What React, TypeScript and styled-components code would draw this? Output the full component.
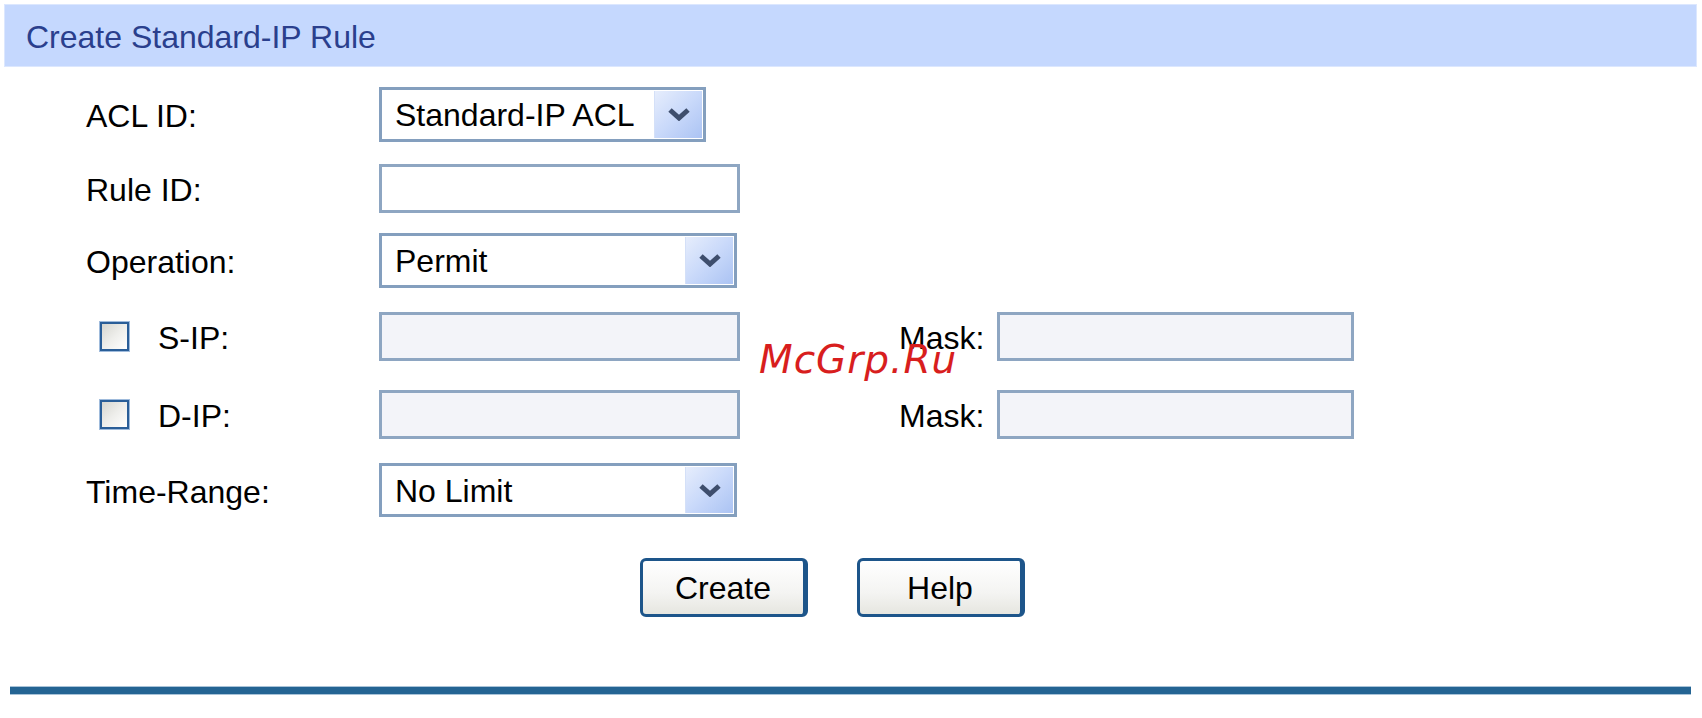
import React from "react";
import styled, { createGlobalStyle } from "styled-components";

const GlobalStyle = createGlobalStyle`
  html, body {
    margin: 0;
    padding: 0;
    background: #ffffff;
  }
  body {
    font-family: "Liberation Sans", Arial, sans-serif;
    color: #000;
  }
`;

const Page = styled.div`
  position: relative;
  width: 1702px;
  height: 718px;
  padding: 4px 5px 0 4px;
  box-sizing: border-box;
  overflow: hidden;
`;

const Header = styled.div`
  height: 63px;
  box-sizing: border-box;
  background: #c5d8fe;
  border: 1px solid #dce7fe;
  display: flex;
  align-items: center;
  padding-left: 21px;
  padding-top: 3px;
  font-size: 32px;
  color: #2a3f8d;
`;

const Form = styled.div`
  margin-top: 10px;
  padding-left: 82px;
  display: flex;
  flex-direction: column;
`;

const Row = styled.div<{ $h: number }>`
  height: ${(p) => p.$h}px;
  display: flex;
  align-items: center;
`;

const Label = styled.div`
  width: 293px;
  flex-shrink: 0;
  font-size: 32px;
  padding-top: 4px;
  box-sizing: border-box;
`;

const CheckLabel = styled.label`
  width: 293px;
  flex-shrink: 0;
  display: flex;
  align-items: center;
  gap: 28px;
  padding-left: 13px;
  box-sizing: border-box;
  font-size: 32px;
`;

const CheckText = styled.span`
  padding-top: 4px;
`;

const Check = styled.input`
  appearance: none;
  margin: 0;
  width: 31px;
  height: 31px;
  box-sizing: border-box;
  border: 3px solid #2a5e98;
  outline: 1px solid #9fbbdc;
  outline-offset: -1px;
  background: linear-gradient(135deg, #d6d6d0 0%, #eeeeeb 50%, #ffffff 100%);
`;

const TextField = styled.input<{ $w: number }>`
  width: ${(p) => p.$w}px;
  height: 49px;
  box-sizing: border-box;
  margin: 0;
  border: 3px solid #8ea6c2;
  background: ${(p) => (p.disabled ? "#f3f4f9" : "#ffffff")};
  font-family: inherit;
  font-size: 30px;
  padding: 0 12px;
  outline: none;
`;

const SelectBox = styled.div<{ $w: number; $h: number }>`
  width: ${(p) => p.$w}px;
  height: ${(p) => p.$h}px;
  box-sizing: border-box;
  border: 3px solid #849fbe;
  background: #ffffff;
  display: flex;
  align-items: stretch;
  padding: 1px;
`;

const SelectValue = styled.div`
  flex: 1;
  display: flex;
  align-items: center;
  padding-left: 12px;
  padding-top: 3px;
  font-size: 32px;
  white-space: nowrap;
`;

const ArrowButton = styled.div`
  width: 47px;
  flex-shrink: 0;
  display: flex;
  align-items: center;
  justify-content: center;
  background: linear-gradient(135deg, #e6edfc 0%, #c9d9fa 50%, #abc3f3 100%);
  border-left: 1px solid #d4e0f8;
`;

const MaskLabel = styled.div`
  margin-left: 159px;
  width: 98px;
  flex-shrink: 0;
  font-size: 32px;
  padding-top: 4px;
  box-sizing: border-box;
`;

const ButtonRow = styled.div`
  height: 117px;
  display: flex;
  align-items: center;
  gap: 49px;
  padding-left: 554px;
`;

const Button = styled.button`
  width: 168px;
  height: 59px;
  box-sizing: border-box;
  margin: 0;
  border: 3px solid #1d558a;
  border-right-width: 5px;
  border-radius: 6px;
  background: linear-gradient(180deg, #ffffff 0%, #f4f4f2 60%, #e6e6e0 100%);
  font-family: inherit;
  font-size: 32px;
  color: #000;
  padding: 2px 0 0 0;
`;

const BottomLine = styled.div`
  margin: 40px 0 0 6px;
  width: 1681px;
  height: 9px;
  box-sizing: border-box;
  background: #246493;
  border-top: 1px solid #a9c3d8;
  border-bottom: 1px solid #a9c3d8;
`;

const Watermark = styled.div`
  position: absolute;
  left: 759px;
  top: 337px;
  font-family: "DejaVu Sans", Verdana, sans-serif;
  font-size: 39px;
  font-style: italic;
  color: #d81e1e;
  letter-spacing: 1px;
  pointer-events: none;
`;

const Chevron = () => (
  <svg width="24" height="14" viewBox="0 0 24 14">
    <path d="M3 3 L12 11 L21 3" fill="none" stroke="#3e4e6d" strokeWidth="5" />
  </svg>
);

const Select = ({ value, w, h }: { value: string; w: number; h: number }) => (
  <SelectBox $w={w} $h={h}>
    <SelectValue>{value}</SelectValue>
    <ArrowButton>
      <Chevron />
    </ArrowButton>
  </SelectBox>
);

export default function App() {
  return (
    <>
      <GlobalStyle />
      <Page>
        <Header>Create Standard-IP Rule</Header>
        <Form>
          <Row $h={74}>
            <Label>ACL ID:</Label>
            <Select value="Standard-IP ACL" w={327} h={55} />
          </Row>
          <Row $h={74}>
            <Label>Rule ID:</Label>
            <TextField $w={361} />
          </Row>
          <Row $h={70}>
            <Label>Operation:</Label>
            <Select value="Permit" w={358} h={55} />
          </Row>
          <Row $h={82}>
            <CheckLabel>
              <Check type="checkbox" />
              <CheckText>S-IP:</CheckText>
            </CheckLabel>
            <TextField $w={361} disabled />
            <MaskLabel>Mask:</MaskLabel>
            <TextField $w={357} disabled />
          </Row>
          <Row $h={74}>
            <CheckLabel>
              <Check type="checkbox" />
              <CheckText>D-IP:</CheckText>
            </CheckLabel>
            <TextField $w={361} disabled />
            <MaskLabel>Mask:</MaskLabel>
            <TextField $w={357} disabled />
          </Row>
          <Row $h={78}>
            <Label>Time-Range:</Label>
            <Select value="No Limit" w={358} h={54} />
          </Row>
          <ButtonRow>
            <Button>Create</Button>
            <Button>Help</Button>
          </ButtonRow>
        </Form>
        <BottomLine />
        <Watermark>McGrp.Ru</Watermark>
      </Page>
    </>
  );
}
